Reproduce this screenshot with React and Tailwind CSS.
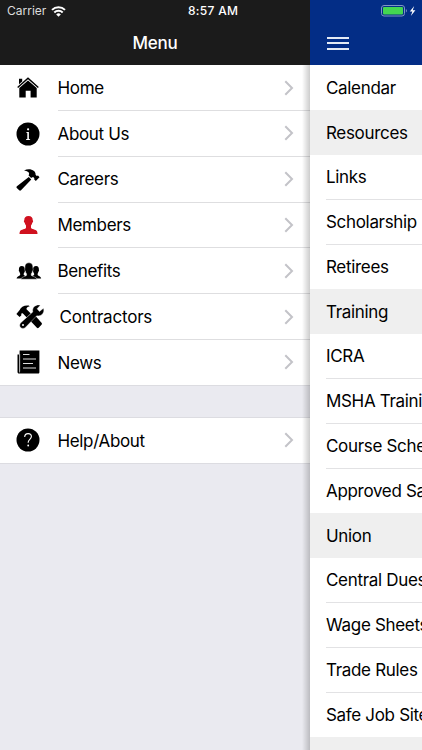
const HomeIcon = () => (
  <svg width="24" height="24" viewBox="0 0 24 24">
    <path d="M12 1.2 1.2 11l.9 1L12 3.3l9.900 8.700.9-1z" />
    <path d="M3 2.800h3.200v2.700L3 8.300z" />
    <path d="M12 4.400 3.300 12v9.600h6.400v-6.900h4.900v6.900h6.100V12z" />
  </svg>
);

const InfoIcon = () => (
  <svg width="24" height="24" viewBox="0 0 24 24">
    <circle cx="12" cy="12" r="11.500" />
    <circle cx="12.100" cy="7.300" r="1.100" fill="#fff" />
    <path d="M10.200 10h2.700v6.900l1.200.4v.6H10v-.6l1.300-.4v-5.900l-1.100-.4z" fill="#fff" />
  </svg>
);

const HammerIcon = () => (
  <svg width="24" height="24" viewBox="0 0 24 24">
    <path d="M12.800 8.900 15.300 11.400 5 22.200c-.6.600-1.300.6-1.800 0L.8 19.900c-.5-.5-.4-1.200.1-1.700z" />
    <path d="M8 2.400C11.500.8 15.200.7 18 3.100c1.200 1.100 1.600 2.100 1.600 3.700l1.200 1.200 1.200-.5 1.500 1.700-3.700 3.700-1.700-1.700.3-1-1.300-1.200c-.9.200-1.500.5-2 1L12.500 7.300c.9-.9.900-2.200-.3-3.300C11.100 3 9.700 2.600 8 2.400z" />
  </svg>
);

const MemberIcon = () => (
  <svg width="24" height="24" viewBox="0 0 24 24" fill="#d0111f">
    <path d="M12.500 3c-2.900 0-4.400 1.700-4.200 4.300-.4.200-.5.600-.4 1.200.1.700.4 1.200.8 1.300.2 1.200.7 2.100 1.300 2.700v2.200c-.3 1.500-4.900 1.700-5.900 3.400-.5.900-.6 1.900-.6 2.900h18c0-1-.1-2-.6-2.900-1-1.700-5.600-1.900-5.900-3.400v-2.200c.6-.6 1.100-1.500 1.300-2.700.4-.1.700-.6.800-1.300.1-.6 0-1-.4-1.200.2-2.600-1.300-4.300-4.200-4.300z" />
  </svg>
);

const GroupIcon = () => (
  <svg width="26" height="24" viewBox="0 0 26 24">
    <g transform="translate(0.300 0.300) scale(0.970 1.120)">
      <path d="M5.600 6C3.500 6 2.600 7.500 2.700 9.300c-.3.700 0 1.600.5 1.700.1.900.5 1.500.8 1.900v.8c-.3 1.100-3.600 1.400-3.700 3.500h7.100c.7-1 2.300-1.500 3.200-2.100-.6-.3-2.800-.6-3-1.400v-.8c.4-.4.900-1 1-1.900.5-.1.700-1 .4-1.700C9 7.500 7.800 6 5.600 6z" />
      <path d="M20.400 6c2.100 0 3 1.500 2.900 3.300.3.700 0 1.600-.5 1.700-.1.900-.5 1.500-.8 1.900v.8c.3 1.100 3.600 1.400 3.700 3.500h-7.100c-.7-1-2.300-1.500-3.200-2.100.6-.3 2.800-.6 3-1.400v-.8c-.4-.4-.9-1-1-1.900-.5-.1-.7-1-.4-1.700C17 7.500 18.200 6 20.400 6z" />
      <path
        stroke="#fff"
        strokeWidth="0.400"
        d="M13 3.100c-3.100 0-4.400 1.900-4.100 4.800-.4.300-.4 2.200.4 2.500.2 1.200.7 2 1.300 2.600v1.200c-.5 1.300-5.800 1.300-5.900 3.600h16.600c-.1-2.300-5.400-2.300-5.900-3.600V13c.6-.6 1.100-1.400 1.300-2.600.8-.3.800-2.200.4-2.500.3-2.900-1-4.800-4.100-4.800z"
      />
    </g>
  </svg>
);

const ToolsIcon = () => (
  <svg width="28" height="26" viewBox="0 0 28 26">
    <path d="m15.500 14.500 4-2.500 6 6.800c.6.700.6 1.300 0 1.900l-2.800 3c-.6.600-1.200.6-1.800 0L14.500 17z" />
    <path d="M.4 9.900 3.700 6C4.800 2.800 8.400 1 12.900 1.600l.7 1c-2.400.3-3.300 1.400-3.100 2.700l4.300 4.200-4 4.100-3.900-4.200c-.8-.2-1.400 0-1.700.4l.2 1.400-1.800 1.900z" />
    <path
      stroke="#fff"
      strokeWidth="0.400"
      d="M18.300 2.600C20.200.9 22.300.6 24.300 1.200l-3.200 3.600 2.400 2.700 4-3.300c.8 2.500.2 4.900-1.500 6.300-1.600 1.400-3.500 1.600-5.200 1.200L9.600 23.200c-1.500 1.500-3.700 1.600-5 .3-1.300-1.300-1.200-3.400.2-4.800L16.800 7.900c-.5-2 .1-3.900 1.500-5.300z"
    />
    <circle cx="7" cy="21.100" r="1" fill="#fff" />
  </svg>
);

const NewsIcon = () => (
  <svg width="24" height="24" viewBox="0 0 24 24">
    <path d="M1.500 4.500h1.500v17.700c0 .5.600.5.600 0V.5h19.800v21.700c0 .8-.5 1.300-1.300 1.300H3c-.9 0-1.500-.6-1.500-1.500z" />
    <path d="M3.700 4v17.500" stroke="#bbb" strokeWidth="0.700" />
    <path d="M7 4.500h6.500M7 9h13M7 13.500h10M7 18h13" stroke="#ddd" strokeWidth="1" />
  </svg>
);

const HelpIcon = () => (
  <svg width="24" height="24" viewBox="0 0 24 24">
    <circle cx="12" cy="12" r="11.500" />
    <path
      d="M8.700 9.100c0-2.200 1.400-3.500 3.400-3.500s3.300 1.200 3.300 3c0 2.600-3.200 3-3.200 5.700v.4"
      fill="none"
      stroke="#fff"
      strokeWidth="1.100"
    />
    <circle cx="12.200" cy="17.500" r="0.900" fill="#fff" />
  </svg>
);

const Chevron = () => (
  <svg width="10" height="16" viewBox="0 0 10 16" fill="none" stroke="#c3c3c8" strokeWidth="2">
    <path d="m1.300 1.300 6.700 6.700-6.700 6.700" />
  </svg>
);

const menuItems = [
  { label: "Home", icon: HomeIcon },
  { label: "About Us", icon: InfoIcon },
  { label: "Careers", icon: HammerIcon },
  { label: "Members", icon: MemberIcon },
  { label: "Benefits", icon: GroupIcon },
  { label: "Contractors", icon: ToolsIcon, wide: true },
  { label: "News", icon: NewsIcon },
];

const pageItems = [
  { label: "Calendar" },
  { label: "Resources", header: true },
  { label: "Links" },
  { label: "Scholarship" },
  { label: "Retirees" },
  { label: "Training", header: true },
  { label: "ICRA" },
  { label: "MSHA Training" },
  { label: "Course Schedule" },
  { label: "Approved Safety" },
  { label: "Union", header: true },
  { label: "Central Dues" },
  { label: "Wage Sheets" },
  { label: "Trade Rules" },
  { label: "Safe Job Sites" },
  { label: "", header: true },
];

function MenuRow({ item, last }) {
  const Icon = item.icon;
  return (
    <div className={`flex bg-white ${last ? "h-[45px]" : "h-[45.800px]"}`}>
      <div className={`flex shrink-0 items-center pl-4 ${item.wide ? "w-[59.500px]" : "w-[57.500px]"}`}>
        <Icon />
      </div>
      <div
        className={`flex flex-1 items-center justify-between pr-4 ${
          last ? "" : "border-b border-[#dedee0]"
        }`}
      >
        <span className={`pt-[2px] ${item.wide ? "tracking-[-0.200px]" : "tracking-[-0.350px]"}`}>
          {item.label}
        </span>
        <Chevron />
      </div>
    </div>
  );
}

function PageRow({ item, line }) {
  return (
    <div className={`h-[44.800px] shrink-0 pl-4 ${item.header ? "bg-[#efefef]" : "bg-white"}`}>
      <div
        className={`flex h-full items-center pt-[2px] whitespace-nowrap tracking-[-0.320px] ${
          line ? "border-b border-[#e2e2e4]" : ""
        }`}
      >
        {item.label}
      </div>
    </div>
  );
}

export default function App() {
  return (
    <div className="flex h-[750px] w-[422px] overflow-hidden bg-[#eaeaf0] font-[Inter,sans-serif] text-[17px] text-black">
      {/* Side menu */}
      <div className="w-[310px] shrink-0">
        <div className="h-[65.200px] bg-[#1b1b1b] text-white">
          <div className="flex h-[22px] items-center pl-[7px] text-[12px]">
            <span className="w-[39px] text-[#ddd]">Carrier</span>
            <svg className="ml-[5px]" width="15" height="11" viewBox="0 0 15 11" fill="none" stroke="#fff" strokeWidth="2">
              <path d="M1 3.900a9.300 9.300 0 0 1 13 0M3.300 6.500a6 6 0 0 1 8.400 0" />
              <path d="M7.500 10.800 5.200 8.400a3.300 3.300 0 0 1 4.600 0z" fill="#fff" stroke="none" />
            </svg>
            <span className="ml-[122px] font-medium tracking-[0.300px] whitespace-nowrap">8:57 AM</span>
          </div>
          <div className="flex h-[43px] items-center justify-center text-[17px] font-medium tracking-[-0.200px]">
            Menu
          </div>
        </div>

        <div className="border-b border-[#dcdce1]">
          {menuItems.map((item, i) => (
            <MenuRow key={item.label} item={item} last={i === menuItems.length - 1} />
          ))}
        </div>
        <div className="mt-[31px] border-y border-[#dcdce1]">
          <MenuRow item={{ label: "Help/About", icon: HelpIcon }} last />
        </div>
      </div>

      {/* Page that was pushed aside by the menu */}
      <div className="relative flex w-[112px] shrink-0 flex-col">
        <div className="h-[65.400px] shrink-0 bg-[#032d86]">
          <div className="flex h-[22px] items-center pl-[71px]">
            <svg width="37" height="12" viewBox="0 0 37 12">
              <rect x="0.500" y="0.500" width="23" height="10.500" rx="2.500" fill="none" stroke="#7f95c4" />
              <rect x="2" y="2" width="20" height="7.500" rx="1" fill="#43d651" />
              <path d="M24.900 4v3.500c1.300-.6 1.300-2.900 0-3.500z" fill="#7f95c4" />
              <path d="m33.200 1-4.400 5.500h2.600L29.800 11l4.600-5.700h-2.700z" fill="#fff" />
            </svg>
          </div>
          <div className="flex h-[42px] flex-col justify-center gap-[3.500px] pl-[17px]">
            <div className="h-[2px] w-[22px] bg-[#e4eaf5]" />
            <div className="h-[2px] w-[22px] bg-[#e4eaf5]" />
            <div className="h-[2px] w-[22px] bg-[#e4eaf5]" />
          </div>
        </div>
        {pageItems.map((item, i) => (
          <PageRow
            key={i}
            item={item}
            line={!item.header && !pageItems[i + 1].header}
          />
        ))}
        {/* soft shadow on the menu's right edge */}
        <div className="absolute top-[65px] right-full h-[685px] w-[8px] bg-gradient-to-l from-black/20 to-transparent" />
      </div>
    </div>
  );
}
